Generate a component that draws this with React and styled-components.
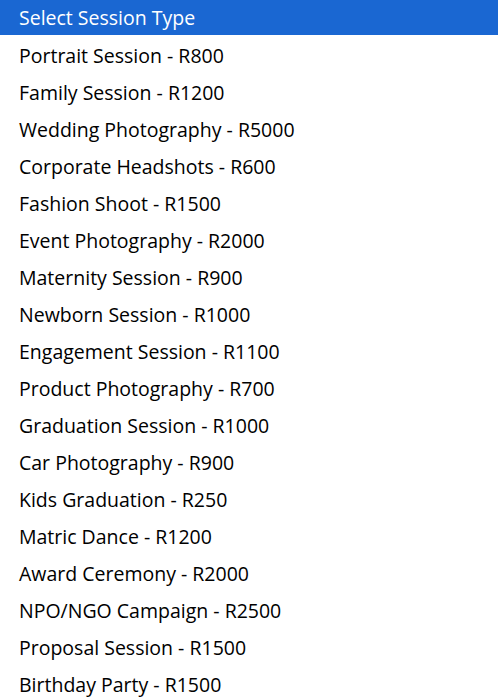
import styled, { createGlobalStyle } from 'styled-components';

const GlobalStyle = createGlobalStyle`
  html, body {
    margin: 0;
    padding: 0;
    background: #fff;
  }
  body {
    font-family: "Open Sans", "Noto Sans", sans-serif;
  }
`;

const options = [
  'Portrait Session - R800',
  'Family Session - R1200',
  'Wedding Photography - R5000',
  'Corporate Headshots - R600',
  'Fashion Shoot - R1500',
  'Event Photography - R2000',
  'Maternity Session - R900',
  'Newborn Session - R1000',
  'Engagement Session - R1100',
  'Product Photography - R700',
  'Graduation Session - R1000',
  'Car Photography - R900',
  'Kids Graduation - R250',
  'Matric Dance - R1200',
  'Award Ceremony - R2000',
  'NPO/NGO Campaign - R2500',
  'Proposal Session - R1500',
  'Birthday Party - R1500',
];

const List = styled.ul`
  list-style: none;
  margin: 0;
  padding: 0;
  width: 498px;
  height: 698px;
  overflow: hidden;
`;

const Option = styled.li`
  display: flex;
  align-items: center;
  box-sizing: border-box;
  height: ${(p) => (p.selected ? '35px' : '37px')};
  margin-bottom: ${(p) => (p.selected ? '2px' : '0')};
  padding: 1px 19px 0;
  font-size: 19.5px;
  line-height: 1;
  color: ${(p) => (p.selected ? '#fff' : '#000')};
  background: ${(p) => (p.selected ? '#1a67d2' : 'transparent')};
  white-space: nowrap;
`;

export default function App() {
  return (
    <>
      <GlobalStyle />
      <List>
        <Option selected>Select Session Type</Option>
        {options.map((o) => (
          <Option key={o}>{o}</Option>
        ))}
      </List>
    </>
  );
}
